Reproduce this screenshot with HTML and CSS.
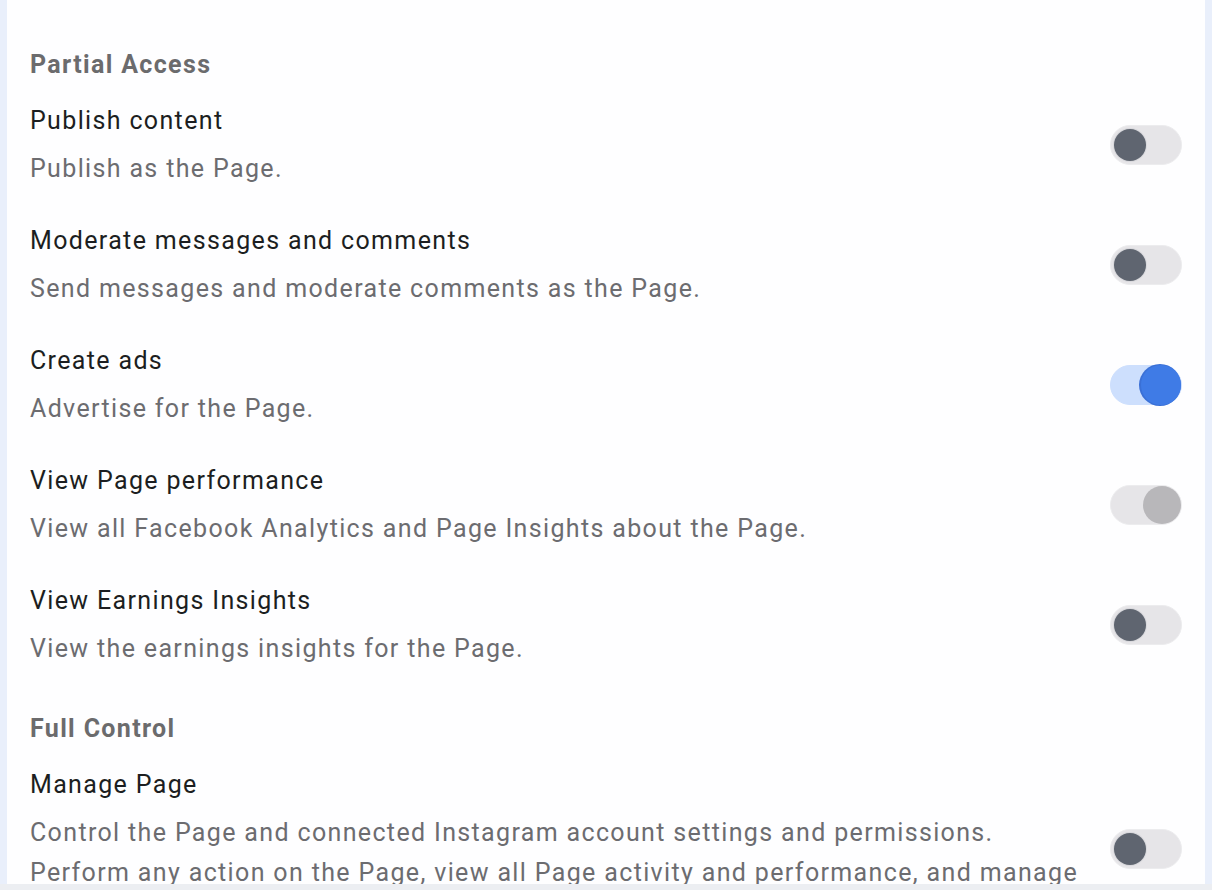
FILE: index.html
```html
<!DOCTYPE html>
<html>
<head>
<meta charset="utf-8">
<link rel="stylesheet" href="styles.css">
</head>
<body>
<div class="viewport">
  <div class="frame">
    <div class="edge"></div>
    <main class="panel">
      <section class="group">
        <h2 class="group-title">Partial Access</h2>
        <div class="item">
          <div class="text">
            <div class="title">Publish content</div>
            <div class="desc">Publish as the Page.</div>
          </div>
          <div class="toggle"><span class="knob"></span></div>
        </div>
        <div class="item">
          <div class="text">
            <div class="title">Moderate messages and comments</div>
            <div class="desc">Send messages and moderate comments as the Page.</div>
          </div>
          <div class="toggle"><span class="knob"></span></div>
        </div>
        <div class="item">
          <div class="text">
            <div class="title">Create ads</div>
            <div class="desc">Advertise for the Page.</div>
          </div>
          <div class="toggle on"><span class="knob"></span></div>
        </div>
        <div class="item">
          <div class="text">
            <div class="title">View Page performance</div>
            <div class="desc">View all Facebook Analytics and Page Insights about the Page.</div>
          </div>
          <div class="toggle disabled"><span class="knob"></span></div>
        </div>
        <div class="item">
          <div class="text">
            <div class="title">View Earnings Insights</div>
            <div class="desc">View the earnings insights for the Page.</div>
          </div>
          <div class="toggle"><span class="knob"></span></div>
        </div>
      </section>
      <section class="group">
        <h2 class="group-title">Full Control</h2>
        <div class="item">
          <div class="text">
            <div class="title">Manage Page</div>
            <div class="desc">Control the Page and connected Instagram account settings and permissions.<br>Perform any action on the Page, view all Page activity and performance, and manage<br>who has access.</div>
          </div>
          <div class="toggle"><span class="knob"></span></div>
        </div>
      </section>
    </main>
    <div class="edge"></div>
  </div>
</div>
<div class="bottom-bar"></div>
</body>
</html>
```

FILE: styles.css
```css
html, body {
  margin: 0;
  padding: 0;
  background: #ffffff;
}
body {
  font-family: Roboto, "Noto Sans", Arial, sans-serif;
  width: 1212px;
  height: 890px;
  overflow: hidden;
}
.viewport {
  height: 884px;
  overflow: hidden;
}
.frame {
  display: flex;
  min-height: 884px;
}
.edge {
  width: 7px;
  flex: none;
  background: #e9effb;
}
.panel {
  flex: 1;
  background: #fefeff;
  padding: 41px 23px 0 23px;
}
.group {
  display: flex;
  flex-direction: column;
  gap: 24px;
}
.group + .group {
  margin-top: 32px;
}
.group-title {
  margin: 0 0 -16px 0;
  font-size: 25px;
  line-height: 48px;
  font-weight: 700;
  letter-spacing: 1.35px;
  color: #6b6b6d;
}
.item {
  display: flex;
  align-items: center;
  justify-content: space-between;
}
.text {
  padding-bottom: 4px;
  letter-spacing: 1.35px;
}
.title {
  font-size: 25px;
  line-height: 48px;
  color: #1c1e21;
}
.desc {
  margin-top: 4px;
  font-size: 25px;
  line-height: 40px;
  color: #6c6c70;
}
.toggle {
  flex: none;
  box-sizing: border-box;
  width: 72px;
  height: 40px;
  border-radius: 20px;
  background: #e6e5e8;
  border: 1px solid #ececee;
  display: flex;
  align-items: center;
  padding: 0 3px;
}
.knob {
  width: 32px;
  height: 32px;
  border-radius: 50%;
  background: #5f6570;
  box-shadow: 0 0 0 1px #d8d8dc;
}
.toggle.on {
  background: #cddffd;
  border-color: #cddffd;
  justify-content: flex-end;
  padding: 0;
}
.toggle.on .knob {
  width: 40px;
  height: 40px;
  background: #3f7be6;
  box-shadow: -1px 0 0 1px #3a70d6;
}
.toggle.disabled {
  background: #e6e5e8;
  justify-content: flex-end;
  padding: 0;
}
.toggle.disabled .knob {
  width: 38px;
  height: 38px;
  background: #b8b7ba;
  box-shadow: none;
}
.bottom-bar {
  height: 6px;
  background: #eceef2;
}
```
